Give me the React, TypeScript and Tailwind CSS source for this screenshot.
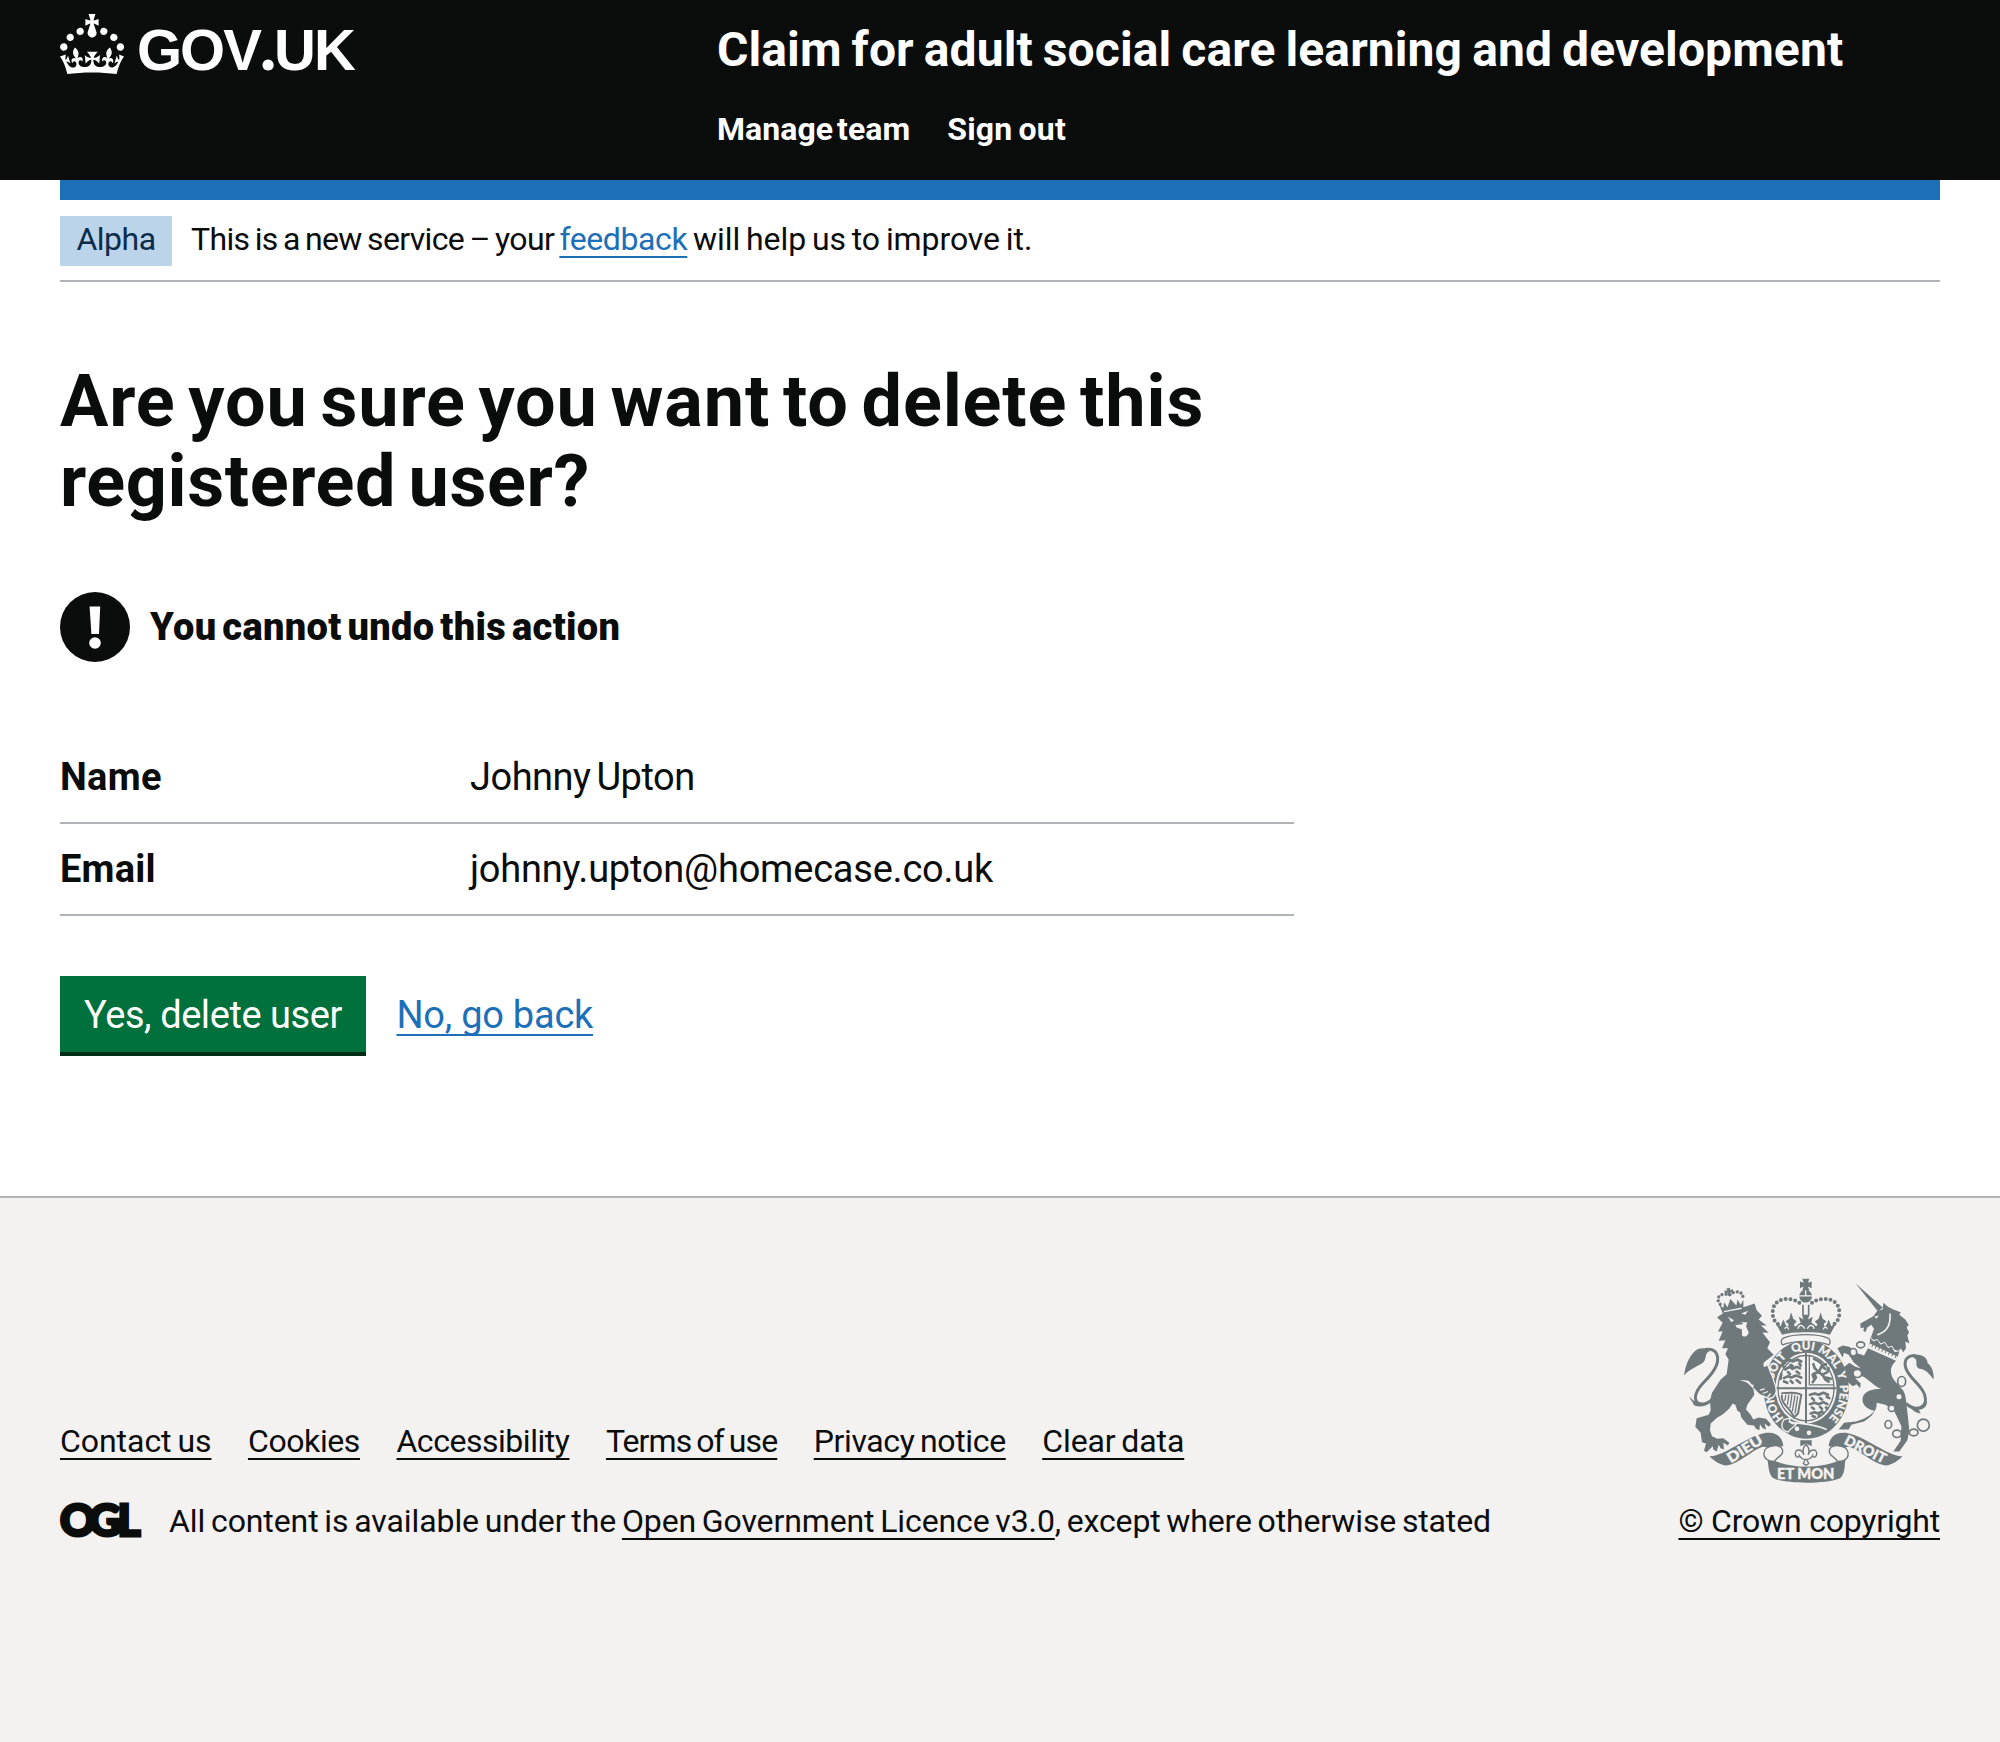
import React from "react";

const link = "underline decoration-2 underline-offset-[6px] [text-decoration-skip-ink:none]";

function Crown() {
  return (
    <svg viewBox="0 0 32 30" className="h-[60px] w-[64px] shrink-0" fill="#fff" aria-hidden="true">
      <path d="M22.6 10.4c-1 .4-2-.1-2.4-1-.4-.9.1-2 1-2.4.9-.4 2 .1 2.4 1s-.1 2-1 2.4m5 3c-1 .4-2-.1-2.4-1-.4-.9.1-2 1-2.4.9-.4 2 .1 2.4 1s0 2-1 2.4m3.3 4.8c-1 .4-2-.1-2.4-1-.4-.9.1-2 1-2.4.9-.4 2 .1 2.4 1s-.1 2-1 2.4M17 4.7l2.3 1.2V2.5l-2.3.7-.2-.2.9-3h-3.4l.9 3-.2.2c-.1.1-2.3-.7-2.3-.7v3.4L15 4.7c.1.1.1.2.2.2l-1.3 4c-.1.2-.1.4-.1.6 0 1.1.8 2 1.9 2.2h.7c1-.2 1.9-1.1 1.9-2.1 0-.2 0-.4-.1-.6l-1.3-4c-.1-.2 0-.2.1-.3m-7.6 5.7c.9.4 2-.1 2.4-1 .4-.9-.1-2-1-2.4-.9-.4-2 .1-2.4 1s0 2 1 2.4m-5 3c.9.4 2-.1 2.4-1 .4-.9-.1-2-1-2.4-.9-.4-2 .1-2.4 1s.1 2 1 2.4m-3.2 4.8c.9.4 2-.1 2.4-1 .4-.9-.1-2-1-2.4-.9-.4-2 .1-2.4 1s0 2 1 2.4m14.8 11c4.4 0 8.6.3 12.3.8 1.1-4.5 2.4-7 3.7-8.8l-2.5-.9c.2 1.3.3 1.9 0 2.7-.4-.4-.8-1.1-1.1-2.3l-1.2 4c.7-.5 1.3-.8 2-.9-1.1 2.5-2.6 3.1-3.5 3-1.1-.2-1.7-1.2-1.5-2.1.3-1.2 1.5-1.5 2.1-.1 1.1-2.3-.8-3-2-2.3 1.9-1.9 2.1-3.5.6-5.6-2.1 1.6-2.1 3.2-1.2 5.5-1.2-1.4-3.2-.6-2.5 1.6.9-1.4 2.1-.5 1.9.8-.2 1.1-1.7 2.1-3.5 1.9-2.7-.2-2.9-2.1-2.9-3.6.7-.1 1.9.5 2.9 1.9l.4-4.3c-1.1 1.1-2.1 1.4-3.2 1.4.4-1.2 2.1-3 2.1-3h-5.4s1.7 1.9 2.1 3c-1.1 0-2.1-.2-3.2-1.4l.4 4.3c1-1.4 2.2-2 2.9-1.9-.1 1.5-.2 3.4-2.9 3.6-1.9.2-3.4-.8-3.5-1.9-.2-1.3 1-2.2 1.9-.8.7-2.3-1.2-3-2.5-1.6.9-2.2.9-3.9-1.2-5.5-1.5 2-1.3 3.7.6 5.6-1.2-.7-3.1 0-2 2.3.6-1.4 1.8-1.1 2.1.1.2.9-.3 1.9-1.5 2.1-.9.2-2.4-.5-3.5-3 .6 0 1.2.3 2 .9l-1.2-4c-.3 1.1-.7 1.9-1.1 2.3-.3-.8-.2-1.4 0-2.7l-2.9.9C1.3 23 2.6 25.5 3.7 30c3.7-.5 7.9-.8 12.3-.8" />
    </svg>
  );
}

const G = "#6f787b";
const B = "#f3f2f1";

function Crest() {
  return (
    <svg viewBox="72 52 750 614" className="mr-[6px] h-[205px] w-[250px]" fill={G} aria-hidden="true">
      {/* Lion tail */}
      <path d="M196 352C178 395 155 428 128 430C98 430 100 398 128 368C158 338 178 312 172 285C168 268 155 263 135 266" fill="none" stroke={G} strokeWidth="9" />
      <path d="M72 344C76 318 84 290 106 270C122 258 142 262 148 272C132 278 142 292 130 304C116 316 90 322 72 344ZM88 406C98 422 118 430 150 424C140 438 112 440 100 432C104 428 90 418 88 406Z" />
      {/* Lion body */}
      <path d="M171 169L190 157L250 139L284 128L290 148L306 165L296 176L320 194L303 194L326 216L307 215L330 244L322 262L341 282L318 300C300 310 318 330 336 348L346 375C352 398 340 414 322 412L314 404L322 398L306 402L298 390L308 386L292 388L280 378L288 372L276 372L266 360L238 357L262 366L280 384L283 402L262 432L258 446L272 462L280 476L296 470L318 474L333 490L326 498L314 488L318 506L308 502L300 490L298 508L288 504L282 494L262 492L244 470L240 454L232 450L226 432L218 428C212 440 196 458 172 470L152 488L150 508L156 526L172 534L190 532L208 546L204 554L190 546L192 566L182 562L176 552L170 572L160 566L158 556L140 574L132 570L138 548L126 544L122 516L106 498L110 472L146 462L152 448L150 420L156 396L182 356L200 340L206 296L196 280L204 262L186 262L196 238L176 240L188 212L174 212L188 186Z" />
      <path d="M204 168L222 178L214 184ZM244 158L264 150L256 162ZM226 192L246 184L262 184L258 196L266 214C266 224 252 232 246 224L246 206L230 200Z" fill={B} />
      <path d="M228 190L248 188M222 204L236 212" stroke={G} strokeWidth="5" />
      {/* Lion crown */}
      <g transform="rotate(-11 214 130)">
        <path d="M178 124L188 137L194 120L201 137L214 114L228 137L235 120L241 137L252 124L246 155H184Z" />
        <path d="M188 148H242" stroke={B} strokeWidth="4" />
        <path d="M181 124C168 102 190 88 214 102C236 88 262 102 249 124" fill="none" stroke={G} strokeWidth="10" strokeLinecap="round" strokeDasharray="0 12" />
        <path d="M208 81h12l-2 7 9-2v10l-9-2 2 9h-12l2-9-9 2V86l9 2z" />
      </g>
      {/* Imperial crown */}
      <path d="M427 54h21l-4 12 11-4v20l-11-5 4 12h-21l4-12-11 5V62l11 4z" />
      <circle cx="437" cy="106" r="19" />
      <path d="M418 105H456M437 88V104" stroke={B} strokeWidth="4" />
      <path d="M418 126C396 108 338 106 338 156C338 174 346 186 358 192M456 126C478 108 538 106 538 156C538 174 530 186 518 192" fill="none" stroke={G} strokeWidth="12" strokeLinecap="round" strokeDasharray="0 14.5" />
      <path d="M429 132V164M446 132V164" stroke={G} strokeWidth="5" />
      <path d="M346 184L362 196L370 176L378 194C384 200 388 196 384 188L376 182L388 174L393 154L400 174L410 182L402 190C402 198 410 198 414 190L422 186L416 168L430 176L426 162H448L444 176L458 168L454 186L462 190C466 198 472 196 472 190L464 182L476 174L482 154L488 174L500 182L492 188C490 198 496 198 500 192L506 176L514 196L530 184L510 222C480 212 396 212 366 222Z" />
      <path d="M414 204C416 190 428 190 434 204M442 204C448 190 460 190 462 204M374 204C378 196 384 198 386 206M490 206C492 198 498 196 502 204" fill="none" stroke={B} strokeWidth="4" />
      {/* Garter */}
      <ellipse cx="439" cy="386" rx="128" ry="148" />
      <path d="M370 232C400 218 474 218 504 232C512 236 512 248 506 252C474 238 400 238 368 252C362 248 362 236 370 232Z" fill={B} stroke={G} strokeWidth="4" />
      <ellipse cx="438" cy="382" rx="92" ry="106" fill={B} />
      <ellipse cx="438" cy="382" rx="84" ry="98" fill="none" stroke={G} strokeWidth="4" />
      <path d="M346 382H530M438 276V488" stroke={G} strokeWidth="6" />
      <path d="M448 282V372H520" stroke={G} strokeWidth="4" fill="none" />
      {/* Three-lion quarters */}
      <g fill="none" stroke={G} strokeWidth="8" strokeLinejoin="round" strokeLinecap="round">
        <path d="M376 326l12-8 10 6 12-6 10 4M384 334l6 6M410 332l8 6M372 320l-4-10 8-4M380 300l8-4 10 6 14-6 12 6M392 312l6 4M418 308l4 6M382 290l10-6M372 352l12-6 10 4 14-6 16 6M372 362l10 4M392 360l6 6M410 358l10 8M364 340l-2 14" />
        <path d="M450 402l14-4 12 4 14-6 14 6M456 412l6 6M480 412l6 4M500 408l8 4M450 430l14-4 12 4 14-6 12 6M456 440l6 4M480 438l6 6M498 440l4 4M452 458l12-4 10 4 12-6 4 6M458 466l6 2M476 466l4-2" />
        <path d="M458 364l10-14-6-12 14-4 12 8 8 14 10 6M476 334l-12-12-4-12M478 330l8-16 12-4M486 342l16-8 4-12M462 352l-4-10M498 350l14 4M484 308l-10-8-12-6M488 318l8 6" />
      </g>
      {/* Harp */}
      <path d="M364 396C372 400 402 390 424 402L422 412L414 458L402 470C392 440 360 430 366 402" fill="none" stroke={G} strokeWidth="6" />
      <path d="M378 402L374 420M387 401L382 432M396 400L390 442M405 403L397 452M413 406L405 458" stroke={G} strokeWidth="4" />
      {/* Motto */}
      <defs>
        <path id="motto" d="M439 503A101 118 0 0 1 439 267A101 118 0 0 1 439 503" />
      </defs>
      <g fill={B} stroke={B} strokeWidth="0.8" fontFamily="Lato" fontWeight="900" fontSize="35">
        <text><textPath href="#motto" startOffset="76">HON</textPath></text>
        <text><textPath href="#motto" startOffset="201">SOIT</textPath></text>
        <text><textPath href="#motto" startOffset="302">QUI</textPath></text>
        <text><textPath href="#motto" startOffset="378">MAL</textPath></text>
        <text><textPath href="#motto" startOffset="466">Y</textPath></text>
        <text><textPath href="#motto" startOffset="504">PENSE</textPath></text>
      </g>
      {/* Buckle and strap */}
      <path d="M372 476C360 494 366 510 384 514C392 500 404 500 410 488C396 492 386 486 390 472Z" stroke={B} strokeWidth="4" />
      <path d="M386 482C412 490 456 486 500 506" fill="none" stroke={B} strokeWidth="5" />
      <circle cx="411" cy="504" r="7" fill={B} /><circle cx="447" cy="516" r="7" fill={B} />
      {/* Lion paw over the garter */}
      <path d="M322 310L338 350L346 375C354 396 342 416 322 412L306 402L296 384L300 330Z" stroke={B} strokeWidth="4" />
      <path d="M318 318L334 348L344 375C348 394 340 408 322 408L300 400L280 380L290 320Z" />
      <path d="M300 388L314 384M308 398L324 392M322 410L332 398" stroke={B} strokeWidth="4" />
      {/* Unicorn */}
      <path d="M587 68L668 140L654 152Z" />
      <path d="M601 188L640 166L652 150L668 146L670 126L684 138L700 146L722 154L718 162L736 176L746 192L740 200L747 214L742 224L748 248L736 242L738 262L730 274L722 262L716 272L632 232L642 204L634 192L622 200L616 214L610 210L612 200L602 202Z" />
      <path d="M642 168L656 164L650 174Z" fill={B} />
      <path d="M690 158C692 190 684 212 652 222" fill="none" stroke={B} strokeWidth="5" />
      <path d="M630 228L640 240L652 236L662 250L674 244L684 260L696 256L704 272L720 270L712 296L626 256Z" stroke={B} strokeWidth="3" />
      <path d="M628 252L712 292" stroke={B} strokeWidth="9" strokeDasharray="8 3" />
      <path d="M624 262L708 300C696 312 690 324 694 340C698 360 720 374 730 390C738 404 738 420 740 436L744 470L748 510L742 538L718 572L700 572L722 540L724 496L712 470L700 446L676 432L650 426C652 448 636 468 612 482L574 492L566 506L536 506L552 486L588 482C612 476 632 464 644 450C620 446 604 430 608 410C614 392 636 384 664 384C640 376 622 350 606 346L586 352L602 368L600 382L590 370L578 376L562 362L556 328L546 324L568 306L586 318L602 322L582 306L566 282L552 276L548 290L532 262L548 254L568 258L588 276L612 284Z" />
      <path d="M738 428C770 456 806 440 794 402C784 370 742 350 736 316C732 296 744 284 766 284" fill="none" stroke={G} strokeWidth="9" />
      <path d="M754 284C776 274 806 290 802 306C816 318 822 334 821 356C808 340 796 324 778 324C764 316 772 306 768 296ZM752 440C772 446 790 436 800 418C804 434 792 446 776 446L782 458C768 456 758 450 752 440Z" />
      <g fill={B} stroke={G} strokeWidth="5">
        <ellipse cx="602" cy="252" rx="12" ry="9" /><ellipse cx="580" cy="274" rx="10" ry="11" /><ellipse cx="592" cy="338" rx="13" ry="12" />
        <ellipse cx="725" cy="362" rx="12" ry="15" fill="none" /><circle cx="717" cy="408" r="10" /><circle cx="695" cy="442" r="10" />
        <ellipse cx="685" cy="491" rx="10" ry="12" /><ellipse cx="711" cy="519" rx="13" ry="11" /><ellipse cx="761" cy="515" rx="13" ry="10" /><circle cx="790" cy="493" r="18" />
      </g>
      {/* Ribbon */}
      <path d="M148 586C190 590 250 530 318 516C350 512 368 530 370 556C352 556 338 566 330 582C334 572 322 556 308 558C270 572 240 608 200 614C180 612 162 600 148 586Z" />
      <path d="M728 586C686 590 626 530 558 516C526 512 508 530 506 556C524 556 538 566 546 582C542 572 554 556 568 558C606 572 636 608 676 614C696 612 714 600 728 586Z" />
      <path d="M322 592C400 626 476 626 556 592C554 620 554 640 540 652C500 670 376 670 340 652C326 640 326 620 322 592Z" />
      <g fill={B} stroke={G} strokeWidth="4">
        <path d="M330 600C304 592 306 560 336 556C350 552 368 556 368 572C368 586 350 588 344 602Z" />
        <path d="M548 600C572 592 570 560 540 556C526 552 508 556 508 572C508 586 526 588 532 602Z" />
      </g>
      <g fill={B} stroke={B} strokeWidth="1.2" fontFamily="Lato" fontWeight="900" fontSize="43">
        <text transform="translate(212 608) rotate(-32)" textLength="118" lengthAdjust="spacingAndGlyphs">DIEU</text>
        <text x="351" y="656" fontSize="46" textLength="172" lengthAdjust="spacingAndGlyphs">ET MON</text>
        <text transform="translate(550 548) rotate(27)" fontSize="42" textLength="134" lengthAdjust="spacingAndGlyphs">DROIT</text>
      </g>
      {/* Pendant fleur */}
      <path d="M421 538H455V556L438 548L421 556Z" />
      <path d="M438 550C450 562 448 574 444 582C452 562 472 564 470 580C468 592 458 590 458 584C452 594 446 596 440 596L446 608L438 614L430 608L436 596C430 596 424 594 418 584C418 590 408 592 406 580C404 564 424 562 432 582C428 574 426 562 438 550Z" fill={B} stroke={G} strokeWidth="4" />
    </svg>
  );
}

export default function App() {
  return (
    <div className="flex min-h-[1742px] w-full flex-col bg-white font-['Roboto',sans-serif] text-[32px] leading-[40px] text-[#0b0c0c]">
      <header className="flex h-[180px] bg-[#0b0c0c] px-[60px] text-white">
        <div className="flex w-[657px] items-start pt-[14px]">
          <Crown />
          <span className="ml-[13px] mt-[6px] font-['Liberation_Sans',sans-serif] text-[58px] font-bold leading-[60px] tracking-[-2px]">
            GOV<span className="font-['Lato',sans-serif] text-[68px] font-black leading-[0]">.</span>UK
          </span>
        </div>
        <div className="pt-[20px] font-bold">
          <div className="whitespace-nowrap text-[48px] leading-[60px] tracking-[0.1px] [word-spacing:-2px]">Claim for adult social care learning and development</div>
          <nav className="mt-[29px] flex gap-[37px]">
            <a className="tracking-[0.05px] [word-spacing:-4px]">Manage team</a>
            <a className="tracking-[0.2px] [word-spacing:-2px]">Sign out</a>
          </nav>
        </div>
      </header>

      <div className="px-[60px]">
        <div className="h-[20px] bg-[#1d70b8]" />
        <div className="flex h-[82px] items-start border-b-2 border-[#b1b4b6] pt-[16px]">
          <strong className="mr-[19px] flex h-[50px] w-[112px] justify-center bg-[#bbd4ea] pt-[3px] font-normal tracking-[-0.5px] text-[#0c2d4a]">Alpha</strong>
          <p className="whitespace-pre pt-[3px]">
            <span className="tracking-[-0.65px] [word-spacing:-2px]">This is a new service – your </span>
            <a className={`${link} tracking-[-0.4px] text-[#1d70b8]`}>feedback</a>
            <span className="tracking-[-0.08px] [word-spacing:-2px]"> will help us to improve it.</span>
          </p>
        </div>
      </div>

      <main className="flex flex-col items-start px-[60px] pt-[80px]">
        <h1 className="text-[72px] font-bold leading-[80px]">
          <span className="block tracking-[0.87px] [word-spacing:-6px]">Are you sure you want to delete this</span>
          <span className="block tracking-[0.6px] [word-spacing:-6px]">registered user?</span>
        </h1>
        <div className="mt-[70px] flex h-[70px] items-center text-[38px] font-bold">
          <svg viewBox="0 0 70 70" className="h-[70px] w-[70px]" aria-hidden="true">
            <circle cx="35" cy="35" r="35" fill="#0b0c0c" />
            <path d="M29.6 14.5h10.6l-1.2 27.5h-7.6z" fill="#fff" />
            <circle cx="35" cy="51" r="5.8" fill="#fff" />
          </svg>
          <strong className="ml-[20px] leading-[50px] tracking-[0.35px] [word-spacing:-4px]">You cannot undo this action</strong>
        </div>
        <dl className="mt-[80px] w-[1234px] text-[38px] leading-[50px]">
          <div className="flex h-[82px] border-b-2 border-[#b1b4b6] pt-[10px]">
            <dt className="w-[410px] font-bold tracking-[0.3px]">Name</dt>
            <dd className="tracking-[-0.5px] [word-spacing:-3px]">Johnny Upton</dd>
          </div>
          <div className="flex h-[92px] border-b-2 border-[#b1b4b6] pt-[20px]">
            <dt className="w-[410px] font-bold tracking-[0.2px]">Email</dt>
            <dd className="tracking-[-0.22px]">johnny.upton@homecase.co.uk</dd>
          </div>
        </dl>
        <div className="mt-[60px] flex h-[80px] gap-[30.5px] text-[38px] leading-[38px]">
          <button className="flex h-[76px] w-[306px] justify-center bg-[#00703c] pt-[20px] tracking-[-0.43px] text-white shadow-[0_4px_0_#002d18]">Yes, delete user</button>
          <a className={`${link} pt-[20px] tracking-[-0.25px] text-[#1d70b8]`}>No, go back</a>
        </div>
      </main>

      <footer className="mt-[140px] flex flex-1 items-start justify-between border-t-2 border-[#b1b4b6] bg-[#f3f2f1] px-[60px] pt-[80px]">
        <div className="pt-[143px]">
          <nav className="flex gap-[36.5px] whitespace-nowrap">
            <a className={`${link} tracking-[-0.05px] [word-spacing:-2px]`}>Contact us</a>
            <a className={`${link} tracking-[-0.4px]`}>Cookies</a>
            <a className={`${link} tracking-[-0.47px]`}>Accessibility</a>
            <a className={`${link} tracking-[-0.92px] [word-spacing:-2px]`}>Terms of use</a>
            <a className={`${link} tracking-[-0.37px] [word-spacing:-2px]`}>Privacy notice</a>
            <a className={`${link} tracking-[-0.11px] [word-spacing:-2px]`}>Clear data</a>
          </nav>
          <div className="mt-[40px] flex whitespace-pre">
            <span className="w-[109px] font-['Lato',sans-serif] text-[44px] font-black leading-[36px] tracking-[-7px] [-webkit-text-stroke:3px_#0b0c0c]">
              OG<span className="ml-[4px]">L</span>
            </span>
            <p>
              <span className="tracking-[-0.1px] [word-spacing:-2px]">All content is available under the </span>
              <a className={`${link} tracking-[-0.12px] [word-spacing:-2px]`}>Open Government Licence v3.0</a>
              <span className="tracking-[-0.14px] [word-spacing:-2px]">, except where otherwise stated</span>
            </p>
          </div>
        </div>
        <div className="flex flex-col items-end">
          <Crest />
          <a className={`${link} mt-[18px] whitespace-nowrap tracking-[-0.2px]`}>© Crown copyright</a>
        </div>
      </footer>
    </div>
  );
}
